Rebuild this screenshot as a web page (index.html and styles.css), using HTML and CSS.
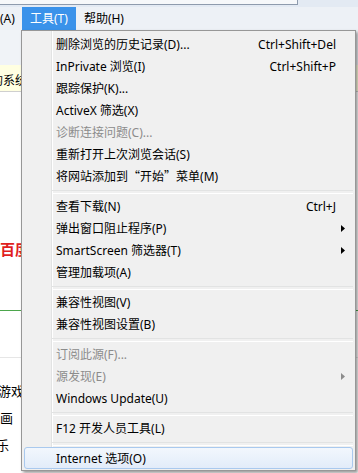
FILE: index.html
```html
<!DOCTYPE html>
<html lang="zh-CN">
<head>
<meta charset="utf-8">
<title>IE 工具菜单</title>
<link rel="stylesheet" href="styles.css">
</head>
<body>
<div class="window">
  <div class="topstrip"><div class="addr"></div></div>
  <div class="menubar">
    <span class="mb-item first">(A)</span>
    <span class="mb-item active">工具(T)</span>
    <span class="mb-item">帮助(H)</span>
  </div>
  <div class="content">
    <div class="cmdarea"></div>
    <div class="infobar"><span class="info-text">的系统</span></div>
    <div class="page">
      <div class="logo">百度</div>
      <div class="rule-green"></div>
      <div class="rule-gray"></div>
      <div class="links">
        <div class="link l1">游戏</div>
        <div class="link l2">画</div>
        <div class="link l3">乐</div>
      </div>
    </div>
  </div>

  <div class="menu">
    <div class="item"><span class="label">删除浏览的历史记录(D)...</span><span class="sc">Ctrl+Shift+Del</span><span class="sub"></span></div>
    <div class="item"><span class="label">InPrivate 浏览(I)</span><span class="sc">Ctrl+Shift+P</span><span class="sub"></span></div>
    <div class="item"><span class="label">跟踪保护(K)...</span><span class="sub"></span></div>
    <div class="item"><span class="label">ActiveX 筛选(X)</span><span class="sub"></span></div>
    <div class="item disabled"><span class="label">诊断连接问题(C)...</span><span class="sub"></span></div>
    <div class="item"><span class="label">重新打开上次浏览会话(S)</span><span class="sub"></span></div>
    <div class="item"><span class="label">将网站添加到<span class="q ql">“</span>开始<span class="q qr">”</span>菜单(M)</span><span class="sub"></span></div>
    <div class="sep"></div>
    <div class="item"><span class="label">查看下载(N)</span><span class="sc">Ctrl+J</span><span class="sub"></span></div>
    <div class="item"><span class="label">弹出窗口阻止程序(P)</span><span class="sub"><svg class="arrow" width="4" height="7" viewBox="0 0 4 7"><path d="M0 0L4 3.5L0 7Z"/></svg></span></div>
    <div class="item"><span class="label">SmartScreen 筛选器(T)</span><span class="sub"><svg class="arrow" width="4" height="7" viewBox="0 0 4 7"><path d="M0 0L4 3.5L0 7Z"/></svg></span></div>
    <div class="item"><span class="label">管理加载项(A)</span><span class="sub"></span></div>
    <div class="sep"></div>
    <div class="item"><span class="label">兼容性视图(V)</span><span class="sub"></span></div>
    <div class="item"><span class="label">兼容性视图设置(B)</span><span class="sub"></span></div>
    <div class="sep"></div>
    <div class="item disabled"><span class="label">订阅此源(F)...</span><span class="sub"></span></div>
    <div class="item disabled"><span class="label">源发现(E)</span><span class="sub"><svg class="arrow" width="4" height="7" viewBox="0 0 4 7"><path d="M0 0L4 3.5L0 7Z"/></svg></span></div>
    <div class="item"><span class="label">Windows Update(U)</span><span class="sub"></span></div>
    <div class="sep"></div>
    <div class="item"><span class="label">F12 开发人员工具(L)</span><span class="sub"></span></div>
    <div class="sep"></div>
    <div class="item hover"><span class="label">Internet 选项(O)</span><span class="sub"></span></div>
  </div>
</div>
</body>
</html>
```

FILE: styles.css
```css
* { box-sizing: border-box; }
html, body { margin: 0; padding: 0; }
body {
  width: 358px;
  height: 473px;
  overflow: hidden;
  background: #ffffff;
  font-family: "Noto Sans", "Noto Sans CJK SC", sans-serif;
  font-size: 12px;
  color: #000;
}
.window {
  position: relative;
  width: 358px;
  height: 473px;
  display: flex;
  flex-direction: column;
  overflow: hidden;
}
.topstrip {
  height: 7px;
  display: flex;
  background: #e3eaf3;
}
.addr {
  width: 298px;
  height: 5px;
  background: #f6f8fa;
  border-bottom: 1px solid #8e9bad;
  border-right: 1px solid #8e9bad;
}
.menubar {
  height: 23px;
  display: flex;
  background: #edf1f6;
  white-space: nowrap;
}
.mb-item {
  padding: 0 8px;
  line-height: 23px;
}
.mb-item.first {
  width: 22px;
  padding: 0;
}
.mb-item.active {
  background: #3a92ea;
  color: #fff;
}
.content {
  flex: 1;
  display: flex;
  flex-direction: column;
}
.cmdarea {
  height: 35px;
  background: #f0f3f7;
}
.infobar {
  height: 27px;
  background: #ffffe1;
  border-bottom: 1px solid #cfcfcf;
  padding-top: 4px;
  line-height: 22px;
  white-space: nowrap;
  overflow: hidden;
  font-family: "Noto Sans CJK SC", sans-serif;
  font-size: 12px;
}
.info-text { margin-left: -9px; }
.page {
  flex: 1;
  display: flex;
  flex-direction: column;
  overflow: hidden;
}
.logo {
  margin-top: 149px;
  height: 16px;
  line-height: 16px;
  font-family: "Noto Sans CJK SC", sans-serif;
  font-size: 15px;
  font-weight: bold;
  color: #e01e1e;
  white-space: nowrap;
}
.rule-green {
  margin-top: 53px;
  height: 1px;
  background: #4ca64c;
}
.rule-gray {
  margin-top: 46px;
  height: 1px;
  background: #e6e6e6;
}
.links {
  margin-top: 19px;
  font-family: "Noto Sans CJK SC", sans-serif;
  font-size: 13px;
  line-height: 27px;
  white-space: nowrap;
}
.l1 { margin-left: -2px; }
.l2 { margin-left: 0; }
.l3 { margin-left: -4px; }

.menu {
  position: absolute;
  left: 21px;
  top: 30px;
  width: 335px;
  padding: 2px 2px 1px 2px;
  border: 1px solid #979797;
  background:
    linear-gradient(to right, transparent 29px, #e2e3e3 29px, #e2e3e3 30px, #ffffff 30px, #ffffff 31px, transparent 31px),
    #f0f0f0;
  box-shadow: 2px 2px 3px rgba(0, 0, 0, 0.4);
  display: flex;
  flex-direction: column;
  white-space: nowrap;
}
.item {
  height: 22px;
  display: flex;
  align-items: center;
  padding-left: 32px;
}
.item .label { flex: 1; }
.item .sc { text-align: right; }
.item .sub {
  width: 17px;
  display: flex;
  align-items: center;
  padding-left: 5px;
}
.arrow { display: block; fill: #000; }
.item.disabled { color: #8c8c8c; }
.item.disabled .arrow { fill: #8c8c8c; }
.item.hover {
  padding-left: 31px;
  border: 1px solid #a9c9ee;
  border-radius: 3px;
  background: linear-gradient(to bottom, #f2f7fd, #e2ecf9);
}
.q {
  display: inline-block;
  width: 12px;
  font-family: "Noto Sans CJK SC", sans-serif;
}
.ql { text-align: right; }
.qr { text-align: left; }
.sep {
  height: 8px;
  margin-left: 28px;
  padding-top: 3px;
}
.sep::before {
  content: "";
  display: block;
  height: 2px;
  border-top: 1px solid #e2e3e3;
  border-bottom: 1px solid #ffffff;
}
```
